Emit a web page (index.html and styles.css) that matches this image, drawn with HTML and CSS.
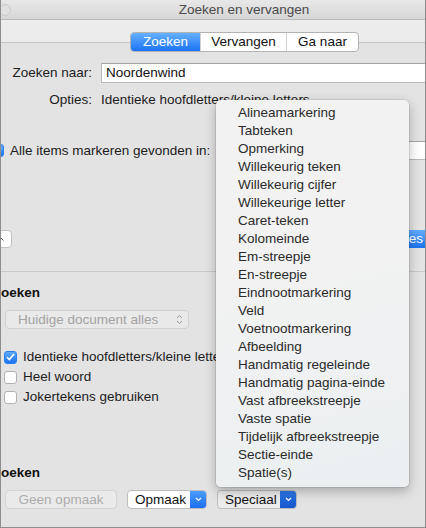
FILE: index.html
```html
<!DOCTYPE html>
<html lang="nl">
<head>
    <meta charset="UTF-8">
    <meta name="viewport" content="width=device-width, initial-scale=1.0">
    <title>Zoeken en vervangen</title>
    <link rel="stylesheet" href="styles.css">
</head>
<body>

<div class="window">
    <div class="titlebar">
        <span class="light"></span>
        <span class="title">Zoeken en vervangen</span>
    </div>
    <div class="toolbar"></div>

    <div class="tabbox">
        <div class="segmented">
            <span class="seg seg-first selected">Zoeken</span>
            <span class="seg seg-mid">Vervangen</span>
            <span class="seg seg-last">Ga naar</span>
        </div>

        <div class="find-grid">
            <span class="label">Zoeken naar:</span>
            <div class="textfield">Noordenwind</div>
            <span class="label">Opties:</span>
            <span>Identieke hoofdletters/kleine letters</span>
        </div>

        <div class="mark-row">
            <span class="check checked">
                <svg width="9" height="8" viewBox="0 0 9 8"><polyline points="1,4.2 3.4,6.6 8,1" fill="none" stroke="#fff" stroke-width="1.6"/></svg>
            </span>
            <span>Alle items markeren gevonden in:</span>
            <div class="textfield short"></div>
        </div>

        <div class="action-row">
            <span class="disclosure">
                <svg width="6" height="4" viewBox="0 0 6 4"><polyline points="0.5,3.5 3,1 5.5,3.5" fill="none" stroke="#555" stroke-width="1"/></svg>
            </span>
            <span class="default-btn">Alles</span>
        </div>

        <div class="separator"></div>

        <div class="heading">oeken</div>

        <div class="popup">
            <span>Huidige document alles</span>
            <svg width="7" height="11" viewBox="0 0 7 11"><polyline points="1,4 3.5,1.5 6,4" fill="none" stroke="#9a9a9a" stroke-width="1"/><polyline points="1,7 3.5,9.5 6,7" fill="none" stroke="#9a9a9a" stroke-width="1"/></svg>
        </div>

        <div class="checks">
            <label class="check-row">
                <span class="check checked">
                    <svg width="9" height="8" viewBox="0 0 9 8"><polyline points="1,4.2 3.4,6.6 8,1" fill="none" stroke="#fff" stroke-width="1.6"/></svg>
                </span>
                Identieke hoofdletters/kleine letters
            </label>
            <label class="check-row">
                <span class="check"></span>
                Heel woord
            </label>
            <label class="check-row">
                <span class="check"></span>
                Jokertekens gebruiken
            </label>
        </div>

        <div class="heading heading-low">oeken</div>

        <div class="button-row">
            <span class="btn btn-disabled">Geen opmaak</span>
            <span class="btn btn-menu">
                <span class="btn-text">Opmaak</span>
                <span class="btn-arrow">
                    <svg width="7" height="5" viewBox="0 0 7 5"><polyline points="1,1 3.5,3.5 6,1" fill="none" stroke="#fff" stroke-width="1.2"/></svg>
                </span>
            </span>
            <span class="btn btn-menu pressed">
                <span class="btn-text">Speciaal</span>
                <span class="btn-arrow">
                    <svg width="7" height="5" viewBox="0 0 7 5"><polyline points="1,1 3.5,3.5 6,1" fill="none" stroke="#fff" stroke-width="1.2"/></svg>
                </span>
            </span>
        </div>
    </div>

    <!-- popup menu for "Speciaal" -->
    <ul class="menu">
        <li>Alineamarkering</li>
        <li>Tabteken</li>
        <li>Opmerking</li>
        <li>Willekeurig teken</li>
        <li>Willekeurig cijfer</li>
        <li>Willekeurige letter</li>
        <li>Caret-teken</li>
        <li>Kolomeinde</li>
        <li>Em-streepje</li>
        <li>En-streepje</li>
        <li>Eindnootmarkering</li>
        <li>Veld</li>
        <li>Voetnootmarkering</li>
        <li>Afbeelding</li>
        <li>Handmatig regeleinde</li>
        <li>Handmatig pagina-einde</li>
        <li>Vast afbreekstreepje</li>
        <li>Vaste spatie</li>
        <li>Tijdelijk afbreekstreepje</li>
        <li>Sectie-einde</li>
        <li>Spatie(s)</li>
    </ul>
</div>

</body>
</html>
```

FILE: styles.css
```css
* {
    box-sizing: border-box;
}
body {
    margin: 0;
    font-family: "Liberation Sans", Arial, sans-serif;
    font-size: 13.5px;
    line-height: 16px;
    color: #1c1c1c;
    background: #fff;
}
.window {
    position: relative;
    width: 426px;
    height: 528px;
    border: 1px solid #8e8e8e;
    border-top: 0;
    overflow: hidden;
    background: #e3e3e3;
}
.titlebar {
    display: flex;
    align-items: center;
    height: 20px;
    border-bottom: 1px solid #b9b9b9;
    background: linear-gradient(#e8e8e8, #d6d6d6);
}
.light {
    width: 12px;
    height: 12px;
    margin-left: -2px;
    border-radius: 50%;
    border: 1px solid #c9c9c9;
    background: #e0e0e0;
}
.title {
    flex: 1;
    margin-left: 52px;
    text-align: center;
    color: #4a4a4a;
}
.toolbar {
    height: 22px;
    background: #ececec;
}
.tabbox {
    border-top: 1px solid #c4c4c4;
    background: #e3e3e3;
}
.segmented {
    display: flex;
    width: 229px;
    height: 20px;
    margin: -11px 0 0 129px;
    border: 1px solid #b3b3b3;
    border-radius: 4px;
    background: #fff;
    overflow: hidden;
}
.seg {
    display: flex;
    align-items: center;
    justify-content: center;
    color: #111;
}
.seg-first {
    width: 69px;
}
.seg-mid {
    width: 86px;
    border-left: 1px solid #d2d2d2;
}
.seg-last {
    width: 72px;
    border-left: 1px solid #d2d2d2;
}
.seg.selected {
    color: #fff;
    background: linear-gradient(#66b0fe, #1a73f4);
}
.find-grid {
    display: grid;
    grid-template-columns: 91px 1fr;
    column-gap: 9px;
    row-gap: 9px;
    align-items: center;
    margin: 11px -12px 0 0;
}
.label {
    text-align: right;
}
.textfield {
    display: flex;
    align-items: center;
    height: 20px;
    padding: 0 4px;
    background: #fff;
    border: 1px solid #b8b8b8;
    border-top-color: #a4a4a4;
    color: #111;
}
.mark-row {
    display: flex;
    align-items: center;
    height: 19px;
    margin: 33px -12px 0 0;
}
.mark-row .check {
    margin-left: -10px;
    margin-right: 6px;
}
.textfield.short {
    flex: 1;
    height: 19px;
    margin-left: 10px;
}
.check {
    display: inline-flex;
    align-items: center;
    justify-content: center;
    width: 13px;
    height: 13px;
    flex: none;
    border: 1px solid #b1b1b1;
    border-radius: 3px;
    background: #fff;
}
.check.checked {
    border-color: #2d7ff0;
    background: linear-gradient(#5eaaff, #1c74f0);
}
.action-row {
    display: flex;
    align-items: center;
    justify-content: space-between;
    height: 18px;
    margin: 70px -12px 0 0;
}
.disclosure {
    display: flex;
    align-items: center;
    justify-content: flex-end;
    width: 22px;
    height: 18px;
    margin-left: -11px;
    padding-right: 7px;
    border: 1px solid #c2c2c2;
    border-radius: 4px;
    background: #fff;
}
.default-btn {
    display: flex;
    align-items: center;
    height: 18px;
    padding: 0 14px;
    border-radius: 4px;
    color: #fff;
    background: linear-gradient(#63adff, #1b72f2);
}
.separator {
    height: 1px;
    margin-top: 23px;
    background: #c8c8c8;
}
.heading {
    margin-top: 13px;
    font-weight: bold;
    color: #111;
}
.heading-low {
    margin-top: 58px;
}
.popup {
    display: flex;
    align-items: center;
    justify-content: space-between;
    width: 184px;
    height: 19px;
    margin: 9px 0 0 4px;
    padding: 0 5px 0 12px;
    border: 1px solid #d0d0d0;
    border-radius: 4px;
    background: #e9e9e9;
    color: #a3a3a3;
}
.checks {
    margin-top: 18px;
}
.check-row {
    display: flex;
    align-items: center;
    height: 20px;
    padding-left: 3px;
    gap: 6px;
    white-space: nowrap;
}
.button-row {
    display: flex;
    gap: 10px;
    margin: 9px 0 0 4px;
}
.btn {
    display: flex;
    align-items: center;
    height: 19px;
    border-radius: 4px;
}
.btn-disabled {
    justify-content: center;
    width: 112px;
    border: 1px solid #d3d3d3;
    background: #eaeaea;
    color: #acacac;
}
.btn-menu {
    width: 80px;
    border: 1px solid #bdbdbd;
    background: #fff;
    overflow: hidden;
}
.btn-menu.pressed {
    background: #ececec;
}
.btn-text {
    flex: 1;
    padding-left: 7px;
    color: #111;
}
.btn-arrow {
    display: flex;
    align-items: center;
    justify-content: center;
    width: 16px;
    height: 100%;
    background: linear-gradient(#4b9cfb, #1b6ff0);
}
.pressed .btn-arrow {
    background: linear-gradient(#2d78e8, #1457cc);
}
.menu {
    position: absolute;
    left: 215px;
    top: 100px;
    width: 193px;
    height: 387px;
    margin: 0;
    padding: 4px 0 5px 22px;
    list-style: none;
    border-radius: 5px;
    background: linear-gradient(165deg, #f2f2f2 40%, #ebeff1);
    box-shadow: 0 0 0 1px rgba(0, 0, 0, 0.08), 0 4px 12px rgba(0, 0, 0, 0.28);
    color: #2a2a2a;
}
.menu li {
    height: 18px;
    line-height: 18px;
    white-space: nowrap;
}
```
